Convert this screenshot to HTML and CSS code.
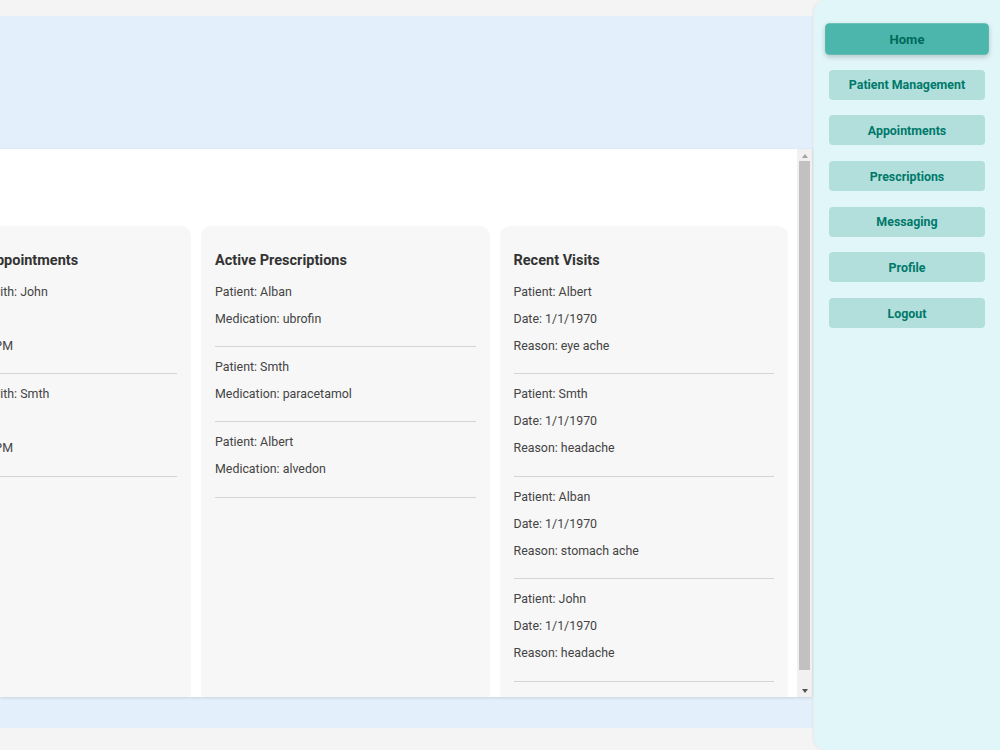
FILE: index.html
```html
<!DOCTYPE html>
<html lang="en">
<head>
<meta charset="utf-8">
<title>Dashboard</title>
<link rel="stylesheet" href="styles.css">
</head>
<body>
<div class="layout">
  <main class="main">
    <header class="top"></header>
    <section class="panel">
      <div class="panel-content">
        <div class="cards">
          <div class="card">
            <h3>Upcoming Appointments</h3>
            <div class="item"><p>Appointment with: John</p><p>Date: 1/1/1970</p><p>Time: 1:00:00 PM</p></div>
            <div class="item"><p>Appointment with: Smth</p><p>Date: 1/1/1970</p><p>Time: 1:00:00 PM</p></div>
          </div>
          <div class="card">
            <h3>Active Prescriptions</h3>
            <div class="item"><p>Patient: Alban</p><p>Medication: ubrofin</p></div>
            <div class="item"><p>Patient: Smth</p><p>Medication: paracetamol</p></div>
            <div class="item"><p>Patient: Albert</p><p>Medication: alvedon</p></div>
          </div>
          <div class="card">
            <h3>Recent Visits</h3>
            <div class="item"><p>Patient: Albert</p><p>Date: 1/1/1970</p><p>Reason: eye ache</p></div>
            <div class="item"><p>Patient: Smth</p><p>Date: 1/1/1970</p><p>Reason: headache</p></div>
            <div class="item"><p>Patient: Alban</p><p>Date: 1/1/1970</p><p>Reason: stomach ache</p></div>
            <div class="item"><p>Patient: John</p><p>Date: 1/1/1970</p><p>Reason: headache</p></div>
          </div>
        </div>
      </div>
      <div class="scrollbar" aria-hidden="true">
        <div class="sb-btn sb-up"><span class="tri-up"></span></div>
        <div class="sb-track"><div class="sb-thumb"></div></div>
        <div class="sb-btn sb-down"><span class="tri-down"></span></div>
      </div>
    </section>
    <footer class="bottom"></footer>
  </main>
  <nav class="sidebar">
    <button class="nav-btn active">Home</button>
    <button class="nav-btn">Patient Management</button>
    <button class="nav-btn">Appointments</button>
    <button class="nav-btn">Prescriptions</button>
    <button class="nav-btn">Messaging</button>
    <button class="nav-btn">Profile</button>
    <button class="nav-btn">Logout</button>
  </nav>
</div>
</body>
</html>
```
FILE: styles.css
```css
* { box-sizing: border-box; }
html, body { margin: 0; padding: 0; }
body {
  background: #f4f4f4;
  font-family: Roboto, "Liberation Sans", sans-serif;
  color: #333;
  width: 1000px;
  height: 750px;
  overflow: hidden;
}
.layout {
  display: flex;
  height: 750px;
}
.main {
  width: 813px;
  margin: 16px 1px 22px 0;
  background: #e3f0fb;
  display: flex;
  flex-direction: column;
  min-width: 0;
}
.top {
  height: 133px;
  flex: none;
}
.panel {
  flex: 1;
  min-height: 0;
  background: #fff;
  margin-right: 1px;
  display: flex;
  box-shadow: 0 1px 3px rgba(0, 0, 0, 0.12);
}
.panel-content {
  flex: 1;
  min-width: 0;
  overflow: hidden;
  padding: 77px 0 20px 0;
}
.scrollbar {
  width: 15px;
  flex: none;
  background: #f1f1f1;
  display: flex;
  flex-direction: column;
}
.sb-btn {
  height: 12px;
  flex: none;
  display: flex;
  align-items: center;
  justify-content: center;
}
.sb-up { padding-top: 1px; }
.sb-down { padding-bottom: 1px; }
.tri-up {
  width: 0;
  height: 0;
  border-left: 3.5px solid transparent;
  border-right: 3.5px solid transparent;
  border-bottom: 4px solid #a3a3a3;
}
.tri-down {
  width: 0;
  height: 0;
  border-left: 3.5px solid transparent;
  border-right: 3.5px solid transparent;
  border-top: 4px solid #505050;
}
.sb-track {
  flex: 1;
  padding: 0 2px;
}
.sb-thumb {
  height: 509px;
  background: #c1c1c1;
}
.bottom {
  height: 31px;
  flex: none;
}
.cards {
  display: flex;
  justify-content: flex-end;
  gap: 10px;
  padding-right: 9px;
}
.card {
  flex: 0 0 288.5px;
  background: #f7f7f7;
  border-radius: 10px;
  padding: 14px 14px 20px;
}
.card h3 {
  font-size: 14.5px;
  line-height: 18px;
  font-weight: 700;
  margin: 12px 0 13.5px;
  color: #333;
  white-space: nowrap;
}
.item {
  border-bottom: 1px solid #d4d4d4;
  padding-bottom: 8px;
}
.item p {
  margin: 12px 0;
  font-size: 12.4px;
  line-height: 15.17px;
  color: #444;
  white-space: nowrap;
}
.sidebar {
  width: 186px;
  flex: none;
  background: #e0f6f9;
  border-radius: 12px 0 0 12px;
  box-shadow: -1px 0 3px rgba(0, 0, 0, 0.06);
  padding: 24px 15px;
  display: flex;
  flex-direction: column;
  gap: 15.7px;
}
.nav-btn {
  height: 30px;
  border: none;
  border-radius: 4px;
  background: #b2dfdb;
  color: #00796b;
  font-family: Roboto, "Liberation Sans", sans-serif;
  font-size: 12.4px;
  font-weight: 700;
  padding: 0;
  cursor: pointer;
}
.nav-btn.active {
  background: #4db6ac;
  color: #00695c;
  transform: scale(1.05);
  box-shadow: 0 2px 5px rgba(0, 0, 0, 0.2);
}
```
